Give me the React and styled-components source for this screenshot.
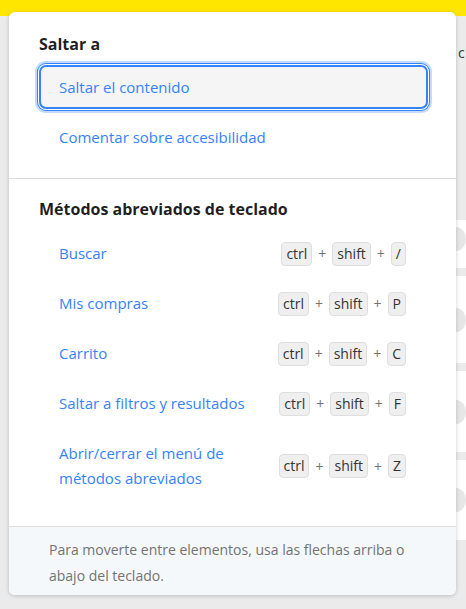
import React from "react";
import styled, { createGlobalStyle } from "styled-components";

const GlobalStyle = createGlobalStyle`
  html, body { margin: 0; padding: 0; }
  body {
    background: #ebebeb;
    font-family: "Open Sans", "Noto Sans", Arial, sans-serif;
    -webkit-font-smoothing: antialiased;
  }
  #root { width: 466px; height: 609px; overflow: hidden; position: relative; }
`;

const Page = styled.div`
  width: 466px;
  height: 609px;
  display: flex;
  flex-direction: column;
  background: #ebebeb;
`;

const TopBar = styled.div`
  height: 16px;
  background: #ffe600;
  flex-shrink: 0;
`;

const SubHeader = styled.div`
  display: flex;
  justify-content: flex-end;
  padding: 27px 0 0 0;
  height: 24px;
  font-size: 14px;
  color: #333;
  white-space: nowrap;
`;

const HeaderText = styled.span`
  width: 8px;
  overflow: hidden;
  display: block;
`;

const CardColumn = styled.div`
  margin: 153px 0 0 300px;
  display: flex;
  flex-direction: column;
  gap: 8px;
`;

const Card = styled.div`
  height: ${(p) => p.h}px;
  background: #fff;
  display: flex;
  align-items: ${(p) => (p.top ? "flex-start" : "center")};
  padding: ${(p) => (p.top ? "7px" : "0")} 0 0 146px;
  box-sizing: border-box;
`;

const Thumb = styled.div`
  width: 24px;
  height: 24px;
  border-radius: 50%;
  background: #e6e6e6;
`;

const Panel = styled.div`
  position: absolute;
  left: 9px;
  top: 12px;
  width: 447px;
  height: 583px;
  background: #fff;
  border-radius: 6px;
  box-shadow: 0 1px 4px rgba(0, 0, 0, 0.2);
  display: flex;
  flex-direction: column;
  overflow: hidden;
`;

const Section = styled.section`
  padding: ${(p) => p.pad};
  display: flex;
  flex-direction: column;
  flex-shrink: 0;
`;

const Title = styled.h2`
  margin: 0;
  font-size: 16px;
  font-weight: 700;
  line-height: 20px;
  color: rgba(0, 0, 0, 0.88);
  padding-left: 30px;
`;

const JumpButton = styled.button`
  margin: 11px 0 0 30px;
  width: 389px;
  height: 44px;
  box-sizing: border-box;
  border: 2px solid #3483fa;
  border-radius: 7px;
  background: #f5f5f5;
  box-shadow: 0 0 0 1px #fff, 0 0 0 2px #3483fa, 0 0 0 4px rgba(52, 131, 250, 0.3);
  text-align: left;
  padding: 0 0 0 18px;
  font-family: inherit;
  font-size: 15px;
  color: #3483fa;
  cursor: pointer;
`;

const LinkText = styled.a`
  font-size: 15px;
  line-height: 20px;
  color: #3483fa;
  text-decoration: none;
  margin: ${(p) => p.m || "0"};
  padding-left: 50px;
`;

const Divider = styled.hr`
  margin: 0;
  border: 0;
  border-top: 1px solid #dcdcdc;
  flex-shrink: 0;
`;

const ShortcutList = styled.div`
  display: flex;
  flex-direction: column;
  margin-top: 22px;
  gap: 25px;
`;

const ShortcutRow = styled.div`
  display: flex;
  align-items: center;
  justify-content: space-between;
  padding: 0 50px 0 50px;
  min-height: 25px;
`;

const ShortcutLabel = styled.span`
  font-size: 15px;
  line-height: 25px;
  color: #3483fa;
  max-width: 200px;
`;

const Keys = styled.div`
  display: flex;
  align-items: center;
  gap: 6px;
`;

const Kbd = styled.kbd`
  font-family: inherit;
  font-size: 14px;
  color: #333;
  background: #efefef;
  border: 1px solid #dedede;
  border-radius: 4px;
  height: 24px;
  line-height: 22px;
  box-sizing: border-box;
  padding: 0 4px;
  min-width: 15px;
  text-align: center;
`;

const Plus = styled.span`
  font-size: 14px;
  color: #737373;
`;

const Footer = styled.footer`
  margin-top: auto;
  border-top: 1px solid #dcdcdc;
  background: #f5f8fa;
  padding: 10px 40px 6px 40px;
  font-size: 14px;
  line-height: 26px;
  color: #737373;
`;

const shortcuts = [
  { label: "Buscar", key: "/" },
  { label: "Mis compras", key: "P" },
  { label: "Carrito", key: "C" },
  { label: "Saltar a filtros y resultados", key: "F" },
  { label: "Abrir/cerrar el menú de métodos abreviados", key: "Z" },
];

function KeyCombo({ k }) {
  return (
    <Keys>
      <Kbd>ctrl</Kbd>
      <Plus>+</Plus>
      <Kbd>shift</Kbd>
      <Plus>+</Plus>
      <Kbd>{k}</Kbd>
    </Keys>
  );
}

export default function App() {
  return (
    <>
      <GlobalStyle />
      <Page>
        <TopBar />
        <SubHeader>
          <HeaderText>c</HeaderText>
        </SubHeader>
        <CardColumn>
          <Card h={48} top>
            <Thumb />
          </Card>
          <Card h={87}>
            <Thumb />
          </Card>
          <Card h={81}>
            <Thumb />
          </Card>
          <Card h={80}>
            <Thumb />
          </Card>
        </CardColumn>
      </Page>
      <Panel role="dialog">
        <Section pad="22px 0 0 0">
          <Title>Saltar a</Title>
          <JumpButton>Saltar el contenido</JumpButton>
          <LinkText href="#" m="18px 0 31px 0">
            Comentar sobre accesibilidad
          </LinkText>
        </Section>
        <Divider />
        <Section pad="20px 0 0 0">
          <Title>Métodos abreviados de teclado</Title>
          <ShortcutList>
            {shortcuts.map((s) => (
              <ShortcutRow key={s.key}>
                <ShortcutLabel>{s.label}</ShortcutLabel>
                <KeyCombo k={s.key} />
              </ShortcutRow>
            ))}
          </ShortcutList>
        </Section>
        <Footer>
          Para moverte entre elementos, usa las flechas arriba o abajo del teclado.
        </Footer>
      </Panel>
    </>
  );
}
